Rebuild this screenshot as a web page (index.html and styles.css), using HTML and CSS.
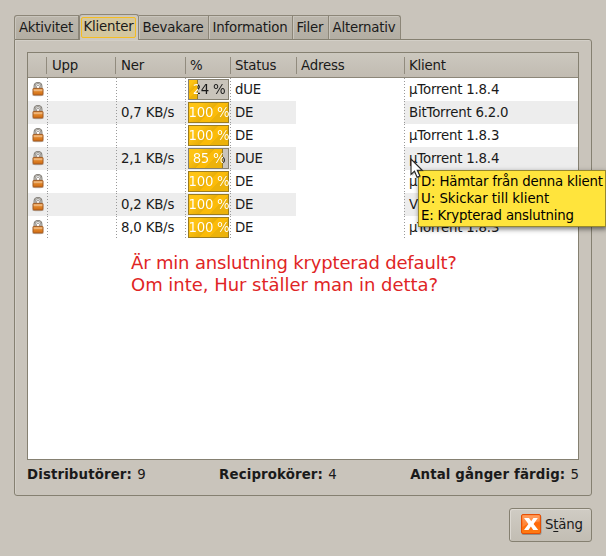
FILE: index.html
```html
<!DOCTYPE html>
<html lang="sv">
<head>
<meta charset="utf-8">
<title>Klienter</title>
<link rel="stylesheet" href="styles.css">
</head>
<body>
<svg class="defs" width="0" height="0" aria-hidden="true">
  <defs>
    <linearGradient id="brass" x1="0" y1="0" x2="0" y2="1"><stop offset="0" stop-color="#e89a43"/><stop offset=".3" stop-color="#efb880"/><stop offset=".5" stop-color="#df8428"/><stop offset="1" stop-color="#d06a12"/></linearGradient>
    <linearGradient id="orange" x1="0" y1="0" x2="0" y2="1"><stop offset="0" stop-color="#ff8a3c"/><stop offset=".5" stop-color="#ff6808"/><stop offset="1" stop-color="#ff7d12"/></linearGradient>
    <symbol id="lock" viewBox="0 0 12 15">
      <ellipse cx="6" cy="13.3" rx="5.8" ry="1" fill="#000" opacity=".2"/>
      <path d="M2.6 7V4.1a3.4 3.2 0 0 1 6.8 0V7" fill="none" stroke="#77736c" stroke-width="2"/>
      <path d="M2.7 7V4.1a3.3 3.1 0 0 1 6.6 0V7" fill="none" stroke="#c9c7c2" stroke-width=".8"/>
      <path d="M4.5 6V4.6a1.5 1.4 0 0 1 3 0V6" fill="none" stroke="#8b8780" stroke-width=".8"/>
      <rect x="1" y="6.4" width="10" height="6.6" rx=".7" fill="url(#brass)" stroke="#a05a22"/>
    </symbol>
  </defs>
</svg>
<main class="dialog">
  <nav class="tabs">
    <span class="tab t-akt">Aktivitet</span><span class="tab active t-kli"><span class="focus">Klienter</span></span><span class="tab t-bev">Bevakare</span><span class="tab t-inf">Information</span><span class="tab t-fil">Filer</span><span class="tab t-alt">Alternativ</span>
  </nav>
  <section class="panel">
    <div class="list">
      <div class="row head"><span></span><span>Upp</span><span>Ner</span><span>%</span><span>Status</span><span>Adress</span><span>Klient</span></div>
      <div class="row"><span><svg class="lock"><use href="#lock"/></svg></span><span></span><span></span><span class="pc"><span class="bar" style="--p:9px"><b>24 %</b></span></span><span>dUE</span><span class="addr"></span><span class="client">µTorrent 1.8.4</span></div>
      <div class="row"><span><svg class="lock"><use href="#lock"/></svg></span><span></span><span>0,7 KB/s</span><span class="pc"><span class="bar full" style="--p:41px"><b>100 %</b></span></span><span>DE</span><span class="addr"></span><span class="client">BitTorrent 6.2.0</span></div>
      <div class="row"><span><svg class="lock"><use href="#lock"/></svg></span><span></span><span></span><span class="pc"><span class="bar full" style="--p:41px"><b>100 %</b></span></span><span>DE</span><span class="addr"></span><span class="client">µTorrent 1.8.3</span></div>
      <div class="row"><span><svg class="lock"><use href="#lock"/></svg></span><span></span><span>2,1 KB/s</span><span class="pc"><span class="bar" style="--p:34px"><b>85 %</b></span></span><span>DUE</span><span class="addr"></span><span class="client">µTorrent 1.8.4</span></div>
      <div class="row"><span><svg class="lock"><use href="#lock"/></svg></span><span></span><span></span><span class="pc"><span class="bar full" style="--p:41px"><b>100 %</b></span></span><span>DE</span><span class="addr"></span><span class="client">µ</span></div>
      <div class="row"><span><svg class="lock"><use href="#lock"/></svg></span><span></span><span>0,2 KB/s</span><span class="pc"><span class="bar full" style="--p:41px"><b>100 %</b></span></span><span>DE</span><span class="addr"></span><span class="client">V</span></div>
      <div class="row"><span><svg class="lock"><use href="#lock"/></svg></span><span></span><span>8,0 KB/s</span><span class="pc"><span class="bar full" style="--p:41px"><b>100 %</b></span></span><span>DE</span><span class="addr"></span><span class="client">µTorrent 1.8.3</span></div>
      <p class="note"><span class="n1">Är min anslutning krypterad default?</span><br><span class="n2">Om inte, Hur ställer man in detta?</span></p>
    </div>
    <footer class="totals"><span><b>Distributörer:</b> 9</span><span><b>Reciprokörer:</b> 4</span><span><b>Antal gånger färdig:</b> 5</span></footer>
  </section>
  <button class="close">
    <svg width="22" height="22" viewBox="0 0 22 22"><rect x="1.5" y="2" width="20" height="20" rx="2" fill="#000" opacity=".25"/><rect x="1.500" y="1.500" width="19" height="19" rx="1.500" fill="url(#orange)" stroke="#e64f05"/><path d="M2.500 2.500h17v6Q10 9 2.500 14z" fill="#fff" opacity=".2"/><path d="M4 5h5l2.200 3.300L13.400 5h4.400l-4.200 5.900 4.600 6.100h-5L10.900 13.400 8.500 17H4l4.400-6.100z" fill="#fff"/></svg>
    <span>S<u>t</u>äng</span>
  </button>
</main>
<div class="tip"><div>D: Hämtar från denna klient</div><div class="wide">U: Skickar till klient</div><div>E: Krypterad anslutning</div></div>
<svg class="pointer" width="16" height="23" viewBox="0 0 16 23"><path d="M2 2v16l3.700-3.500 2.500 6 3-1.300-2.500-5.700H14z" fill="#000" opacity=".2"/><path d="M1 1v15.500l3.500-3.300 2.600 6 2.800-1.200-2.600-5.700h4.900z" fill="#fff" stroke="#222" stroke-width="1.100"/></svg>
</body>
</html>
```
FILE: styles.css
```css
* { box-sizing: border-box; }
body {
  margin: 0;
  width: 606px;
  height: 556px;
  overflow: hidden;
  position: relative;
  background: #c9c4bb;
  color: #1a1a1a;
  font: 13.33px/17px "DejaVu Sans", sans-serif;
  letter-spacing: -0.2px;
  white-space: nowrap;
}
.defs { position: absolute; }
.dialog { padding: 14px 14px 0; display: flex; flex-direction: column; }
.tabs { display: flex; align-items: flex-end; height: 25px; }
.tab {
  height: 24px;
  padding: 3px 1px 0 0;
  text-align: center;
  border: 1px solid #8c8678;
  border-left-width: 0;
  border-bottom: 0;
  background: linear-gradient(#bcb7ad, #b3aea3);
  box-shadow: inset 1px 1px #c9c5bc;
}
.t-akt { width: 65px; border-left-width: 1px; border-radius: 3px 0 0 0; }
.t-kli { width: 60px; }
.t-bev { width: 70px; }
.t-inf { width: 84px; }
.t-fil { width: 36px; }
.t-alt { width: 72px; border-radius: 0 3px 0 0; }
.tab.active {
  height: 26px;
  margin-bottom: -1px;
  padding: 2px 2px 0 1px;
  border-left-width: 1px;
  border-radius: 3px 3px 0 0;
  background: #cdc8bf;
  position: relative;
}
.focus {
  display: block;
  height: 21px;
  line-height: 17px;
  border: 1px solid #f5bd22;
  border-radius: 2px;
  background: #d4c79f;
}
.panel {
  height: 457px;
  padding: 12px;
  border: 1px solid #858071;
  border-radius: 0 3px 3px 3px;
  box-shadow: inset 1px 1px #d3cfc7;
}
.list { height: 408px; width: 552px; border: 1px solid #858071; background: #fff; }
.row {
  display: grid;
  grid-template-columns: 19px 69px 69px 45px 66px 108px 174px;
  height: 23px;
  line-height: 23px;
}
.row > span {
  padding-left: 5px;
  background-image: linear-gradient(#999 1px, transparent 1px);
  background-size: 1px 3px;
  background-repeat: repeat-y;
}
.row > span:nth-child(1) { padding-left: 4px; background-image: none; }
.row > span:nth-child(4) { padding-left: 3px; }
.row > .addr { background: #fff; }
.row:nth-child(odd) > span:not(.addr) { background-color: #ededed; }
.row.head {
  height: 25px;
  line-height: 25px;
  border-bottom: 1px solid #8c8678;
  background: linear-gradient(#ccc8bf, #c1bbb1);
}
.row.head > span {
  padding-left: 6px;
  background: linear-gradient(#918b7e, #918b7e) 0 4px / 1px 17px no-repeat !important;
  position: relative;
  left: -1px;
}
.row.head > span:first-child { background: none !important; }
.row.head > span:nth-child(4) { padding-left: 6px; }
.row.head > span:nth-child(n + 4) { left: 0; padding-left: 5px; }
.lock { display: block; width: 12px; height: 15px; margin: 4px 0 0 0; }
.bar {
  display: block;
  width: 41px;
  height: 21px;
  margin-top: 1px;
  border: 1px solid #858071;
  line-height: 19px;
  text-align: center;
  background: linear-gradient(#9a7c22, #9a7c22) calc(var(--p) - 1px) 0 / 1px 100% no-repeat,
    linear-gradient(135deg, #ffc414 0 20%, #e9ae08 48%, #fbbb08 49% 65%, #ecb20a 66%) 0 0 / var(--p) 100% no-repeat,
    #c9c4bb;
}
.bar.full { border-color: #9a7c22; }
.bar b {
  display: block;
  margin: 0 -2px;
  padding-left: 1px;
  letter-spacing: -0.3px;
  font-weight: normal;
  color: transparent;
  background: linear-gradient(90deg, #fff calc(var(--p) + 2px), #1a1a1a calc(var(--p) + 2px));
  -webkit-background-clip: text;
  background-clip: text;
}
.note {
  margin: 13px 0 0 103px;
  font-size: 18px;
  line-height: 22px;
  letter-spacing: 0;
  color: #df2525;
}
.n1 { letter-spacing: -0.17px; }
.n2 { letter-spacing: -0.03px; }
.totals { display: flex; justify-content: space-between; width: 552px; padding-top: 6px; letter-spacing: 0; }
.totals b { letter-spacing: 0.13px; margin-right: 1px; }
.close {
  align-self: flex-end;
  display: flex;
  align-items: center;
  gap: 3px;
  width: 83px;
  height: 34px;
  margin-top: 12px;
  padding: 0 0 2px 10px;
  border: 1px solid #858071;
  border-radius: 3px;
  background: linear-gradient(#d0ccc4, #c2bdb3);
  box-shadow: inset 1px 1px #ddd9d2;
  color: inherit;
  font: inherit;
  letter-spacing: inherit;
}
.close u { text-underline-offset: 2px; }
.tip {
  position: absolute;
  left: 418px;
  top: 170px;
  width: 188px;
  height: 57px;
  padding: 2px 2px;
  border: 1px solid #98892c;
  background: #ffe43c;
  color: #000;
  box-shadow: 1px 2px 5px rgba(0, 0, 0, .55);
}
.tip .wide { letter-spacing: -0.02px; }
.pointer { position: absolute; left: 410px; top: 158px; }
```
